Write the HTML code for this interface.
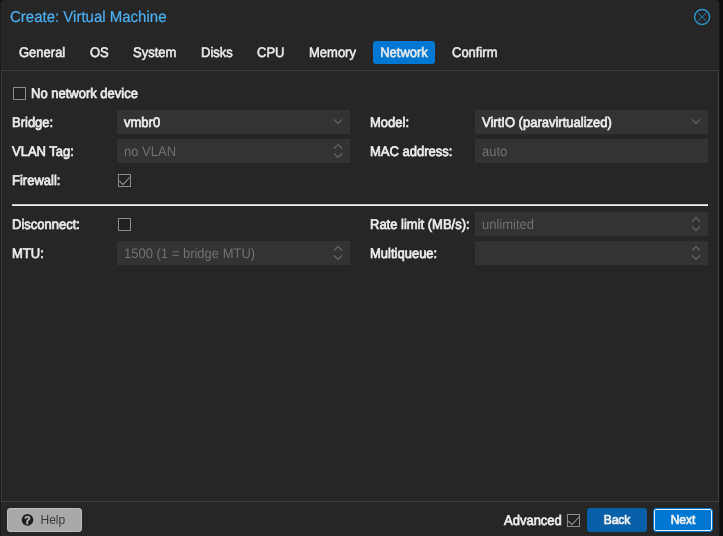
<!DOCTYPE html>
<html><head><meta charset="utf-8">
<style>
html,body{margin:0;padding:0;background:#0d0d0d;}
body{width:723px;height:536px;font-family:"Liberation Sans",sans-serif;font-size:13px;color:#f0f0f0;position:relative;overflow:hidden;}
.abs{position:absolute;}
#win{left:0;top:0;width:720px;height:540px;background:#262626;border-radius:4px 4px 0 0;border-left:1px solid #1b1b1b;border-right:1px solid #161616;box-sizing:border-box;}
.title{left:10px;top:8px;font-size:15px;line-height:18px;color:#4cb0f4;white-space:nowrap;transform:rotate(0.03deg) scaleY(1.05);transform-origin:0 14.2px;-webkit-text-stroke:0.2px #4cb0f4;}
.tab{top:41px;height:23px;line-height:23px;font-size:13px;color:#ededed;white-space:nowrap;-webkit-text-stroke:0.5px #ededed;transform:rotate(0.03deg) scaleY(1.07);transform-origin:0 16px;}

.lbl{height:24px;line-height:24px;white-space:nowrap;color:#ededed;-webkit-text-stroke:0.65px #ededed;transform:rotate(0.03deg) scaleY(1.07);transform-origin:0 16.5px;}
.fld{height:24px;background:#333333;}
.ftx{height:24px;line-height:24px;white-space:nowrap;color:#ededed;-webkit-text-stroke:0.65px #ededed;transform:rotate(0.03deg) scaleY(1.07);transform-origin:0 16.5px;}
.ftx.dis{color:#727272;-webkit-text-stroke:0;}
.cb{width:11px;height:11px;border:1px solid #8c8c8c;background:#222;}
svg{position:absolute;overflow:visible;}
</style></head><body>
<div class="abs" id="win"></div>
<div class="abs" id="lay" style="left:0;top:0;width:723px;height:536px;will-change:transform;">
<div class="abs title">Create: Virtual Machine</div>
<svg style="left:692px;top:7px" width="20" height="20" viewBox="0 0 20 20"><circle cx="10.1" cy="10" r="7.5" fill="none" stroke="#2a9bd4" stroke-width="1.3"/><path d="M6.2 6.2 L14 13.8 M14 6.2 L6.2 13.8" stroke="#1f86bd" stroke-width="1" fill="none"/></svg>

<div class="abs tab" style="left:19px;">General</div>
<div class="abs tab" style="left:90px;">OS</div>
<div class="abs tab" style="left:133px;">System</div>
<div class="abs tab" style="left:201px;">Disks</div>
<div class="abs tab" style="left:257px;">CPU</div>
<div class="abs tab" style="left:309px;">Memory</div>
<div class="abs" style="left:373px;top:41px;width:62px;height:23px;background:#0077d2;border-radius:3px;"></div>
<div class="abs tab" style="left:373px;width:62px;text-align:center;">Network</div>
<div class="abs tab" style="left:452px;">Confirm</div>

<!-- panel border -->
<div class="abs" style="left:1px;top:70px;width:718px;height:432px;border:1px solid #3e3e3e;box-sizing:border-box;"></div>

<div class="abs cb" style="left:13px;top:87px;"></div>
<div class="abs lbl" style="left:31px;top:82px;">No network device</div>

<div class="abs lbl" style="left:12px;top:111px;">Bridge:</div>
<div class="abs fld" style="left:117px;top:110px;width:233px;"></div>
<div class="abs ftx" style="left:124px;top:111px;">vmbr0</div>
<svg style="left:330px;top:110px" width="20" height="24"><path d="M4 9.4 L8 13.4 L12 9.4" fill="none" stroke="#666" stroke-width="1.15"/></svg>

<div class="abs lbl" style="left:12px;top:140px;">VLAN Tag:</div>
<div class="abs fld" style="left:117px;top:139px;width:233px;"></div>
<div class="abs ftx dis" style="left:124px;top:140px;">no VLAN</div>
<svg style="left:330px;top:139px" width="20" height="24"><path d="M4 9.5 L8 5.5 L12 9.5 M4 14.5 L8 18.5 L12 14.5" fill="none" stroke="#666" stroke-width="1.15"/></svg>

<div class="abs lbl" style="left:12px;top:169px;">Firewall:</div>
<div class="abs cb" style="left:118px;top:174px;"></div>
<svg style="left:118px;top:174px" width="13" height="13"><path d="M1.4 7 L5 10.6 L12 3" fill="none" stroke="#909090" stroke-width="1.1"/></svg>

<div class="abs lbl" style="left:370px;top:111px;">Model:</div>
<div class="abs fld" style="left:475px;top:110px;width:233px;"></div>
<div class="abs ftx" style="left:482px;top:111px;">VirtIO (paravirtualized)</div>
<svg style="left:688px;top:110px" width="20" height="24"><path d="M4 9.4 L8 13.4 L12 9.4" fill="none" stroke="#666" stroke-width="1.15"/></svg>

<div class="abs lbl" style="left:370px;top:140px;">MAC address:</div>
<div class="abs fld" style="left:475px;top:139px;width:233px;"></div>
<div class="abs ftx dis" style="left:482px;top:140px;">auto</div>

<div class="abs" style="left:12px;top:204px;width:696px;height:2px;box-sizing:border-box;border-top:1px solid #c6c6c6;border-left:1px solid #c6c6c6;border-bottom:1px solid #f4f4f4;border-right:1px solid #f4f4f4;"></div>

<div class="abs lbl" style="left:12px;top:213px;">Disconnect:</div>
<div class="abs cb" style="left:118px;top:218px;"></div>
<div class="abs lbl" style="left:12px;top:242px;">MTU:</div>
<div class="abs fld" style="left:117px;top:241px;width:233px;"></div>
<div class="abs ftx dis" style="left:124px;top:242px;">1500 (1 = bridge MTU)</div>
<svg style="left:330px;top:241px" width="20" height="24"><path d="M4 9.5 L8 5.5 L12 9.5 M4 14.5 L8 18.5 L12 14.5" fill="none" stroke="#666" stroke-width="1.15"/></svg>

<div class="abs lbl" style="left:370px;top:213px;">Rate limit (MB/s):</div>
<div class="abs fld" style="left:475px;top:212px;width:233px;"></div>
<div class="abs ftx dis" style="left:482px;top:213px;">unlimited</div>
<svg style="left:688px;top:212px" width="20" height="24"><path d="M4 9.5 L8 5.5 L12 9.5 M4 14.5 L8 18.5 L12 14.5" fill="none" stroke="#666" stroke-width="1.15"/></svg>

<div class="abs lbl" style="left:370px;top:242px;">Multiqueue:</div>
<div class="abs fld" style="left:475px;top:241px;width:233px;"></div>
<svg style="left:688px;top:241px" width="20" height="24"><path d="M4 9.5 L8 5.5 L12 9.5 M4 14.5 L8 18.5 L12 14.5" fill="none" stroke="#666" stroke-width="1.15"/></svg>

<!-- footer -->
<div class="abs" style="left:7px;top:508px;width:75px;height:24px;background:#a9a9a9;border-radius:3px;border:1px solid #bcbcbc;box-sizing:border-box;"></div>
<svg style="left:21px;top:514px" width="13" height="12"><circle cx="6.5" cy="5.9" r="5.8" fill="#1c1c1c"/><text x="6.5" y="9.9" font-family="Liberation Sans, sans-serif" font-size="10.5" font-weight="bold" text-anchor="middle" fill="#b4b4b4" stroke="#b4b4b4" stroke-width="0.5">?</text></svg>
<div class="abs" style="left:40.5px;top:509px;height:23px;line-height:23px;font-size:12px;color:#383838;">Help</div>
<div class="abs lbl" style="left:504px;top:509px;height:23px;line-height:23px;">Advanced</div>
<div class="abs cb" style="left:567px;top:514px;"></div>
<svg style="left:567px;top:514px" width="13" height="13"><path d="M1.4 7 L5 10.6 L12 3" fill="none" stroke="#909090" stroke-width="1.1"/></svg>
<div class="abs" style="left:587px;top:508px;width:60px;height:24px;line-height:24px;font-size:12px;background:#0860a8;border-radius:3px;text-align:center;-webkit-text-stroke:0.7px #f0f0f0;">Back</div>
<div class="abs" style="left:653px;top:508px;width:60px;height:24px;line-height:22px;font-size:12px;background:#0077d2;border-radius:3px;text-align:center;border:1px solid #0077d2;box-shadow:inset 0 0 0 1px #e4eef8;box-sizing:border-box;-webkit-text-stroke:0.7px #f0f0f0;">Next</div>
</div>
</body></html>
